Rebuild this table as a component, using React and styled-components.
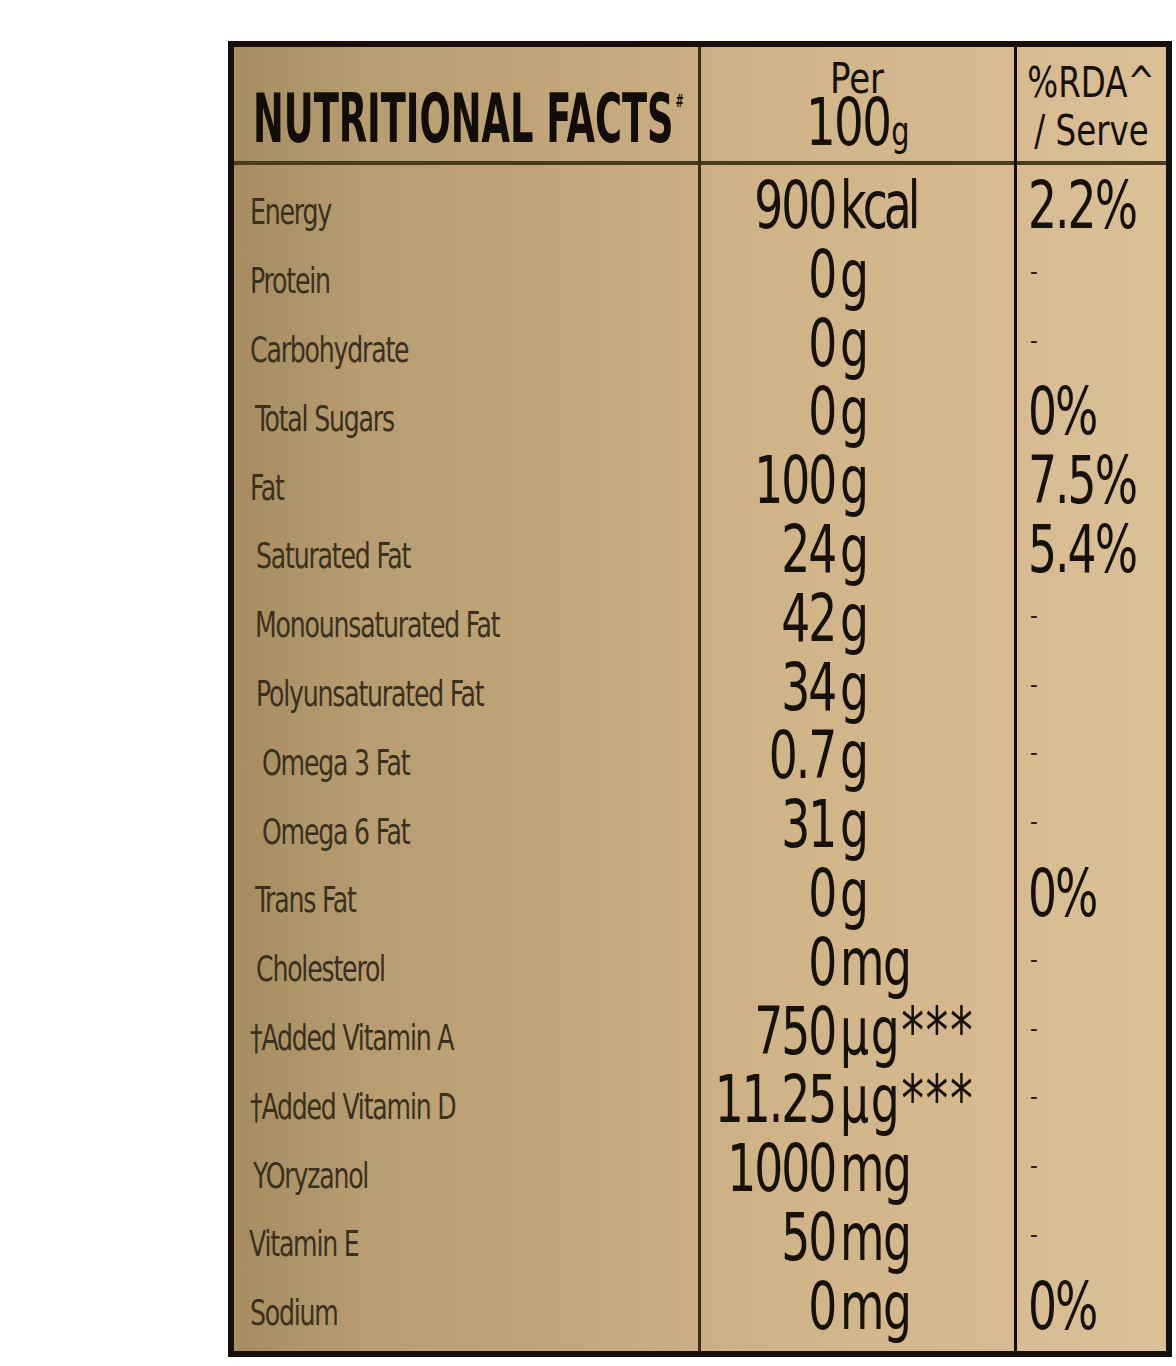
import React from "react";
import styled, { createGlobalStyle } from "styled-components";

const GlobalStyle = createGlobalStyle`
  html, body {
    margin: 0;
    padding: 0;
    background: #ffffff;
  }
`;

const FONT = `"Liberation Sans Narrow", "DejaVu Sans Condensed", "Liberation Sans", sans-serif`;

const Page = styled.div`
  padding: 41px 0 0 228px;
  font-family: ${FONT};
  font-stretch: condensed;
`;

const Table = styled.div`
  display: flex;
  width: 944px;
  box-sizing: border-box;
  border: 6px solid #17100a;
  background: linear-gradient(
    90deg,
    #a58d61 0%,
    #b79d71 14%,
    #c4a77b 38%,
    #d1b388 58%,
    #d7ba90 82%,
    #dbc098 100%
  );
`;

const Column = styled.div`
  display: flex;
  flex-direction: column;
  width: ${(p) => p.$width};
  box-sizing: border-box;
  border-right: ${(p) => (p.$divider ? `3px solid ${p.$divider}` : "none")};
`;

const HeadCell = styled.div`
  height: 118px;
  box-sizing: border-box;
  border-bottom: 4px solid #4a3a20;
  display: flex;
  flex-direction: column;
  justify-content: flex-end;
  align-items: ${(p) => p.$align || "flex-start"};
  padding: ${(p) => p.$pad || "0"};
`;

const Title = styled.div`
  font-weight: bold;
  font-size: 67px;
  line-height: 1;
  color: #120d08;
  white-space: nowrap;
  transform: scaleX(0.61);
  transform-origin: left bottom;
`;

const Sup = styled.sup`
  font-size: 18px;
  vertical-align: top;
  position: relative;
  top: 6px;
  margin-left: 3px;
`;

const HeadSmall = styled.div`
  font-size: 42px;
  line-height: ${(p) => p.$lh || 1};
  color: #15100a;
  white-space: nowrap;
  margin-top: ${(p) => p.$mt || 0}px;
  transform: scaleX(${(p) => p.$sx || 1});
`;

const HeadBig = styled.div`
  font-size: 65px;
  line-height: 0.8;
  color: #15100a;
  letter-spacing: -2px;
  margin-top: 1px;
  transform: scaleX(0.8);
  small {
    font-size: 40px;
    letter-spacing: 0;
    margin-left: 1px;
  }
`;

const Body = styled.div`
  padding: 6px 0 10px;
`;

const Cell = styled.div`
  height: 68.8px;
  box-sizing: border-box;
  display: flex;
  align-items: flex-end;
  padding-bottom: ${(p) => p.$pb}px;
  padding-left: ${(p) => p.$pl || 0}px;
`;

const Label = styled.span`
  display: inline-block;
  font-size: 35px;
  line-height: 1;
  letter-spacing: -1.5px;
  color: #3b301d;
  white-space: nowrap;
  margin-left: ${(p) => p.$indent}px;
  transform: scaleX(0.8);
  transform-origin: left bottom;
`;

const Amount = styled.div`
  display: grid;
  grid-template-columns: 134px auto;
  column-gap: 6px;
  align-items: baseline;
  font-size: 65px;
  line-height: 1;
  color: #16110b;
  letter-spacing: -2.5px;
  white-space: nowrap;
  transform: scaleX(0.78);
  transform-origin: 136px 50%;
`;

const Num = styled.span`
  justify-self: end;
`;

const Unit = styled.span`
  letter-spacing: ${(p) => p.$spacing};
`;

const Rda = styled.span`
  display: inline-block;
  font-size: 65px;
  line-height: 1;
  letter-spacing: -2.5px;
  color: #16110b;
  white-space: nowrap;
  transform: scaleX(0.78);
  transform-origin: left bottom;
`;

const Dash = styled.span`
  font-size: 24px;
  line-height: 1;
  color: #2a2015;
  margin: 0 0 23px 2px;
`;

const unitSpacing = (unit) => {
  if (unit === "kcal") return "-5px";
  if (unit.startsWith("µg")) return "2px";
  return "-2px";
};

const rows = [
  { label: "Energy", indent: 0, num: "900", unit: "kcal", rda: "2.2%" },
  { label: "Protein", indent: 0, num: "0", unit: "g", rda: "-" },
  { label: "Carbohydrate", indent: 0, num: "0", unit: "g", rda: "-" },
  { label: "Total Sugars", indent: 5, num: "0", unit: "g", rda: "0%" },
  { label: "Fat", indent: 0, num: "100", unit: "g", rda: "7.5%" },
  { label: "Saturated Fat", indent: 6, num: "24", unit: "g", rda: "5.4%" },
  { label: "Monounsaturated Fat", indent: 5, num: "42", unit: "g", rda: "-" },
  { label: "Polyunsaturated Fat", indent: 6, num: "34", unit: "g", rda: "-" },
  { label: "Omega 3 Fat", indent: 12, num: "0.7", unit: "g", rda: "-" },
  { label: "Omega 6 Fat", indent: 12, num: "31", unit: "g", rda: "-" },
  { label: "Trans Fat", indent: 5, num: "0", unit: "g", rda: "0%" },
  { label: "Cholesterol", indent: 6, num: "0", unit: "mg", rda: "-" },
  { label: "†Added Vitamin A", indent: 0, num: "750", unit: "µg***", rda: "-" },
  { label: "†Added Vitamin D", indent: 0, num: "11.25", unit: "µg***", rda: "-" },
  { label: "YOryzanol", indent: 3, num: "1000", unit: "mg", rda: "-" },
  { label: "Vitamin E", indent: -1, num: "50", unit: "mg", rda: "-" },
  { label: "Sodium", indent: 0, num: "0", unit: "mg", rda: "0%" },
];

export default function App() {
  return (
    <Page>
      <GlobalStyle />
      <Table>
        <Column $width="467px" $divider="#3b2d17">
          <HeadCell $pad="0 0 8px 19px">
            <Title>
              NUTRITIONAL FACTS<Sup>#</Sup>
            </Title>
          </HeadCell>
          <Body>
            {rows.map((r) => (
              <Cell key={r.label} $pb={9.4} $pl={16}>
                <Label $indent={r.indent}>{r.label}</Label>
              </Cell>
            ))}
          </Body>
        </Column>

        <Column $width="316px" $divider="#100b06">
          <HeadCell $align="center" $pad="0 0 12.5px 0">
            <HeadSmall $sx={0.9} $lh={0.8}>
              Per
            </HeadSmall>
            <HeadBig>
              100<small>g</small>
            </HeadBig>
          </HeadCell>
          <Body>
            {rows.map((r) => (
              <Cell key={r.label} $pb={1.8}>
                <Amount>
                  <Num>{r.num}</Num>
                  <Unit $spacing={unitSpacing(r.unit)}>{r.unit}</Unit>
                </Amount>
              </Cell>
            ))}
          </Body>
        </Column>

        <Column $width="149px">
          <HeadCell $align="center" $pad="0 0 9px 0">
            <HeadSmall $sx={0.86}>%RDA^</HeadSmall>
            <HeadSmall $sx={0.86} $mt={6}>
              / Serve
            </HeadSmall>
          </HeadCell>
          <Body>
            {rows.map((r) =>
              r.rda === "-" ? (
                <Cell key={r.label} $pb={1.8} $pl={11}>
                  <Dash>-</Dash>
                </Cell>
              ) : (
                <Cell key={r.label} $pb={1.8} $pl={11}>
                  <Rda>{r.rda}</Rda>
                </Cell>
              )
            )}
          </Body>
        </Column>
      </Table>
    </Page>
  );
}
